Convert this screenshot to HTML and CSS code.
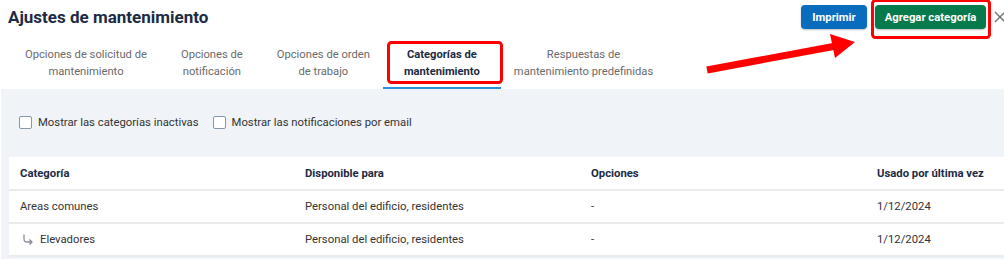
FILE: index.html
```html
<!DOCTYPE html>
<html lang="es">
    <head>
        <meta charset="utf-8">
        <title>Ajustes de mantenimiento</title>
        <link rel="stylesheet" href="styles.css">
    </head>
    <body>
        <div class="page">
            <div class="top">
                <h1 class="title">Ajustes de mantenimiento</h1>
                <div class="actions">
                    <button class="btn btn-blue">Imprimir</button>
                    <button class="btn btn-green">Agregar categoría</button>
                    <span class="close">
                        <svg width="12" height="12" viewBox="0 0 12 12"><path d="M1 1 L11 11 M11 1 L1 11" stroke="#6f6f6f" stroke-width="1.4" fill="none"/></svg>
                    </span>
                </div>
            </div>

            <div class="tabs">
                <div class="tab">Opciones de solicitud de<br>mantenimiento</div>
                <div class="tab">Opciones de<br>notificación</div>
                <div class="tab">Opciones de orden<br>de trabajo</div>
                <div class="tab active">Categorías de<br>mantenimiento</div>
                <div class="tab">Respuestas de<br>mantenimiento predefinidas</div>
            </div>

            <div class="content">
                <div class="filters">
                    <label class="check"><span class="box"></span>Mostrar las categorías inactivas</label>
                    <label class="check"><span class="box"></span>Mostrar las notificaciones por email</label>
                </div>

                <div class="card">
                    <table class="grid">
                        <thead>
                            <tr><th>Categoría</th><th>Disponible para</th><th>Opciones</th><th>Usado por última vez</th></tr>
                        </thead>
                        <tbody>
                            <tr><td>Areas comunes</td><td>Personal del edificio, residentes</td><td>-</td><td>1/12/2024</td></tr>
                            <tr>
                                <td><span class="sub"><svg width="12" height="12" viewBox="0 0 12 12"><path d="M2 0.5 V5 Q2 8 5 8 H10 M7.5 5.5 L10 8 L7.5 10.5" stroke="#8a8f96" stroke-width="1.3" fill="none"/></svg>Elevadores</span></td>
                                <td>Personal del edificio, residentes</td><td>-</td><td>1/12/2024</td>
                            </tr>
                        </tbody>
                    </table>
                </div>
            </div>

            <!-- annotation marks -->
            <svg class="marks" width="1004" height="259" viewBox="0 0 1004 259">
                <rect x="388.5" y="42.5" width="113" height="40" rx="3" fill="none" stroke="#f00" stroke-width="3"/>
                <rect x="872.5" y="0.5" width="117" height="37" rx="3" fill="none" stroke="#f00" stroke-width="3"/>
                <line x1="707" y1="70" x2="836" y2="46" stroke="#f00" stroke-width="7"/>
                <polygon points="855,42 830,34 835,58" fill="#f00"/>
            </svg>
        </div>
    </body>
</html>
```

FILE: styles.css
```css
html, body {
    margin: 0;
    padding: 0;
    background: #fff;
    overflow: hidden;
}
body { font-family: Roboto, "Liberation Sans", sans-serif; }
.page { position: relative; width: 1004px; height: 259px; overflow: hidden; }

.top {
    display: flex;
    justify-content: space-between;
    align-items: flex-start;
    padding: 5px 0 0 8px;
    height: 39px;
    box-sizing: border-box;
}
.title { margin: 2px 0 0; font-size: 17px; font-weight: 700; color: #1b2b43; }
.actions { display: flex; align-items: center; gap: 8px; }
.btn {
    height: 24px;
    border: 0;
    border-radius: 4px;
    color: #fff;
    font: 700 11.3px Roboto, "Liberation Sans", sans-serif;
    padding: 0;
    box-shadow: 0 1px 2px rgba(0,0,0,.25);
}
.btn-blue { background: #0a6cbc; width: 66px; }
.btn-green { background: #077a4b; width: 111px; }
.close { display: flex; width: 12px; margin-right: -2px; }

.tabs { display: flex; padding-left: 8px; height: 50px; box-sizing: border-box; }
.tab {
    position: relative;
    padding: 7px 17px 0;
    font-size: 11.2px;
    line-height: 17px;
    color: #6a6a6a;
    text-align: center;
}
.tab.active { color: #1b2b43; font-weight: 700; }
.tab.active::after {
    content: "";
    position: absolute;
    left: -4px; right: -4px; bottom: 0;
    height: 2px;
    background: #2f8fd8;
}

.content { background: #f0f3f8; height: 170px; padding-left: 8px; margin-left: 1px; overflow: hidden; }
.filters { display: flex; gap: 14px; padding: 26px 0 0 10px; height: 68px; box-sizing: border-box; }
.check { display: flex; align-items: center; gap: 6px; font-size: 11.3px; color: #333; height: 14px; }
.box {
    width: 11px; height: 11px;
    border: 1px solid #8597ab;
    border-radius: 2px;
    background: #fff;
}

.card { background: #fff; width: 1200px; }
.grid { border-collapse: collapse; table-layout: fixed; font-size: 11.3px; }
.grid th, .grid td {
    width: 286px;
    height: 33px;
    padding: 0;
    text-align: left;
    box-sizing: border-box;
}
.grid th:first-child, .grid td:first-child { padding-left: 11px; width: 296px; }
.grid th { color: #1b2b43; font-weight: 700; border-bottom: 2px solid #ebebeb; }
.grid td { color: #333; border-bottom: 2px solid #ebebeb; }
.sub { display: flex; align-items: center; gap: 6px; padding-left: 2px; }

.marks { position: absolute; left: 0; top: 0; pointer-events: none; }
```
